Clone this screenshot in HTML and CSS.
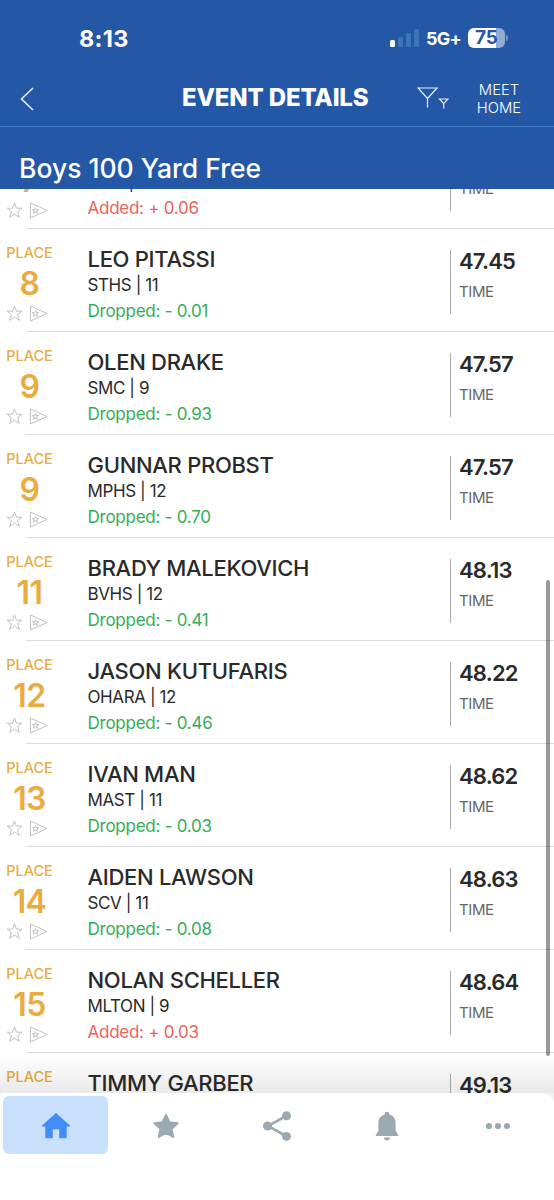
FILE: index.html
```html
<!DOCTYPE html>
<html lang="en">
<head>
<meta charset="UTF-8">
<title>Event Details</title>
<link rel="stylesheet" href="styles.css">
</head>
<body>
<svg class="sprite" width="0" height="0">
<symbol id="star" viewBox="0 0 17 17"><path d="M8.5 1L10.5 6.2H16L11.6 9.6L13.3 15.4L8.5 12L3.7 15.4L5.4 9.6L1 6.2H6.5Z"/></symbol>
<symbol id="flag" viewBox="0 0 19 17"><path d="M1.5 1V16L18 8.5Z"/><path d="M6.5 5.5L7.3 7.6H9.6L7.8 9L8.5 11.3L6.5 10L4.5 11.3L5.2 9L3.4 7.6H5.7Z"/></symbol>
</svg>
<div class="app">
<header>
<div class="status">
<span class="clock">8:13</span>
<div class="signal"><i></i><i></i><i></i><i></i></div>
<span class="network">5G+</span>
<div class="battery"><span>75</span></div>
<i class="battery-tip"></i>
</div>
<div class="toolbar">
<svg class="back" width="14" height="24" viewBox="0 0 14 24"><path d="M13 1L1.5 12L13 23"/></svg>
<h1>EVENT DETAILS</h1>
<svg class="filter" width="32" height="22" viewBox="0 0 32 22"><path d="M1 1H20L10.5 11.5ZM10.5 11V20.5M22.5 12H31L26.7 16.7ZM26.7 16.5V21.5"/></svg>
<a class="meet-home">MEET<br>HOME</a>
</div>
<h2>Boys 100 Yard Free</h2>
</header>

<main>
<ul class="results">
<li>
<div class="place"><span></span><b>7</b><div class="icons"><svg><use href="#star"/></svg><svg><use href="#flag"/></svg></div></div>
<div class="swimmer"><h3></h3><p class="school">|</p><p class="added">Added: + 0.06</p></div>
<div class="time"><b></b><span>TIME</span></div>
</li>
<li>
<div class="place"><span>PLACE</span><b>8</b><div class="icons"><svg><use href="#star"/></svg><svg><use href="#flag"/></svg></div></div>
<div class="swimmer"><h3>LEO PITASSI</h3><p>STHS | 11</p><p class="dropped">Dropped: - 0.01</p></div>
<div class="time"><b>47.45</b><span>TIME</span></div>
</li>
<li>
<div class="place"><span>PLACE</span><b>9</b><div class="icons"><svg><use href="#star"/></svg><svg><use href="#flag"/></svg></div></div>
<div class="swimmer"><h3>OLEN DRAKE</h3><p>SMC | 9</p><p class="dropped">Dropped: - 0.93</p></div>
<div class="time"><b>47.57</b><span>TIME</span></div>
</li>
<li>
<div class="place"><span>PLACE</span><b>9</b><div class="icons"><svg><use href="#star"/></svg><svg><use href="#flag"/></svg></div></div>
<div class="swimmer"><h3>GUNNAR PROBST</h3><p>MPHS | 12</p><p class="dropped">Dropped: - 0.70</p></div>
<div class="time"><b>47.57</b><span>TIME</span></div>
</li>
<li>
<div class="place"><span>PLACE</span><b>11</b><div class="icons"><svg><use href="#star"/></svg><svg><use href="#flag"/></svg></div></div>
<div class="swimmer"><h3>BRADY MALEKOVICH</h3><p>BVHS | 12</p><p class="dropped">Dropped: - 0.41</p></div>
<div class="time"><b>48.13</b><span>TIME</span></div>
</li>
<li>
<div class="place"><span>PLACE</span><b>12</b><div class="icons"><svg><use href="#star"/></svg><svg><use href="#flag"/></svg></div></div>
<div class="swimmer"><h3>JASON KUTUFARIS</h3><p>OHARA | 12</p><p class="dropped">Dropped: - 0.46</p></div>
<div class="time"><b>48.22</b><span>TIME</span></div>
</li>
<li>
<div class="place"><span>PLACE</span><b>13</b><div class="icons"><svg><use href="#star"/></svg><svg><use href="#flag"/></svg></div></div>
<div class="swimmer"><h3>IVAN MAN</h3><p>MAST | 11</p><p class="dropped">Dropped: - 0.03</p></div>
<div class="time"><b>48.62</b><span>TIME</span></div>
</li>
<li>
<div class="place"><span>PLACE</span><b>14</b><div class="icons"><svg><use href="#star"/></svg><svg><use href="#flag"/></svg></div></div>
<div class="swimmer"><h3>AIDEN LAWSON</h3><p>SCV | 11</p><p class="dropped">Dropped: - 0.08</p></div>
<div class="time"><b>48.63</b><span>TIME</span></div>
</li>
<li>
<div class="place"><span>PLACE</span><b>15</b><div class="icons"><svg><use href="#star"/></svg><svg><use href="#flag"/></svg></div></div>
<div class="swimmer"><h3>NOLAN SCHELLER</h3><p>MLTON | 9</p><p class="added">Added: + 0.03</p></div>
<div class="time"><b>48.64</b><span>TIME</span></div>
</li>
<li>
<div class="place"><span>PLACE</span></div>
<div class="swimmer"><h3>TIMMY GARBER</h3></div>
<div class="time"><b>49.13</b></div>
</li>
</ul>
<div class="fade"></div>
<div class="scrollbar"></div>
</main>

<nav>
<a class="active"><svg width="28" height="26" viewBox="0 0 28 26"><path d="M14 0L28 12.5V13.4H24.7V23.7Q24.7 25.3 23 25.3H17.2V16.2H10.8V25.3H5Q3.3 25.3 3.3 23.7V13.4H0V12.5Z"/></svg></a>
<a><svg width="28" height="26" viewBox="0 0 28 26"><path d="M14 2L17.4 9.2L25.6 10.2L19.6 15.8L21.2 24L14 20L6.8 24L8.4 15.8L2.4 10.2L10.6 9.2Z" stroke="#9aaab0" stroke-width="2" stroke-linejoin="round"/></svg></a>
<a><svg width="30" height="30" viewBox="0 0 30 30"><path d="M24 5L6 15L24 25" fill="none" stroke="#9aaab0" stroke-width="2.6"/><circle cx="24.5" cy="4.8" r="4.5"/><circle cx="5.5" cy="15" r="4.5"/><circle cx="24.5" cy="25.4" r="4.5"/></svg></a>
<a><svg width="24" height="30" viewBox="0 0 24 30"><path d="M12 .7A2.3 2.3 0 0 1 14.3 3V3.6C18.5 4.7 20.6 8 20.6 12V19.5L23.3 24.2V25H.7V24.2L3.4 19.5V12C3.4 8 5.5 4.7 9.7 3.6V3A2.3 2.3 0 0 1 12 .7ZM8.6 26.6H15.4Q14.5 29.4 12 29.4Q9.5 29.4 8.6 26.6Z"/></svg></a>
<a><svg width="26" height="8" viewBox="0 0 26 8"><circle cx="4" cy="4" r="3.1"/><circle cx="13" cy="4" r="3.1"/><circle cx="22" cy="4" r="3.1"/></svg></a>
</nav>
</div>
</body>
</html>
```
FILE: styles.css
```css
* {
box-sizing: border-box;
margin: 0;
padding: 0;
}
body {
font-family: 'Inter', sans-serif;
color: #2a2a2a;
background: #fff;
}
.sprite {
position: absolute;
}
.app {
height: 1200px;
display: flex;
flex-direction: column;
overflow: hidden;
}
header {
height: 189px;
background: #2458a7;
color: #fff;
}
.status {
height: 72px;
padding: 4px 46px 0 79px;
display: flex;
align-items: center;
}
.clock {
flex: 1;
font-size: 23.5px;
font-weight: 700;
letter-spacing: 0.3px;
}
.signal {
display: flex;
align-items: flex-end;
gap: 3px;
height: 18px;
margin-right: 7px;
}
.signal i {
width: 5px;
height: 18px;
border-radius: 1.5px;
background: #3f72b8;
}
.signal i:nth-child(1) {
height: 7px;
background: #fff;
}
.signal i:nth-child(2) {
height: 10px;
}
.signal i:nth-child(3) {
height: 14px;
}
.network {
width: 35px;
margin-right: 7px;
font-size: 18px;
font-weight: 700;
letter-spacing: -0.8px;
}
.battery {
width: 37px;
height: 20px;
border-radius: 6px;
background: linear-gradient(90deg, #fff 75%, #91acd3 75%);
color: #2458a7;
font-size: 19px;
font-weight: 700;
line-height: 20px;
text-align: center;
}
.battery-tip {
width: 2px;
height: 6px;
margin-left: 1px;
border-radius: 0 2px 2px 0;
background: #7095c8;
}
.toolbar {
height: 55px;
display: flex;
align-items: center;
border-bottom: 1px solid #3f79c4;
}
.toolbar svg {
fill: none;
stroke: #e4f0ff;
stroke-width: 1.2;
}
.toolbar .back {
margin: 0 148px 0 20px;
stroke-width: 1.6;
}
.toolbar h1 {
width: 235px;
margin-top: -4px;
font-size: 24px;
font-weight: 800;
letter-spacing: -0.15px;
white-space: nowrap;
}
.toolbar .filter {
margin-top: -3px;
}
.meet-home {
width: 60px;
margin: -1px 0 0 20px;
font-size: 14.8px;
font-weight: 300;
line-height: 18px;
text-align: center;
}
header h2 {
padding: 23px 0 0 19px;
font-size: 26.5px;
font-weight: 500;
line-height: 37px;
white-space: nowrap;
}
main {
height: 914px;
position: relative;
overflow: hidden;
}
.results {
margin-top: -63px;
list-style: none;
}
.results li {
height: 103px;
display: flex;
align-items: flex-start;
background: linear-gradient(#dcdcdc, #dcdcdc) no-repeat 26px 102px / 100% 1px;
}
.place {
width: 59px;
padding-top: 16px;
color: #e9ac40;
text-align: center;
}
.place span {
display: block;
height: 16px;
font-size: 14.5px;
line-height: 16px;
font-weight: 500;
}
.place b {
display: block;
height: 44px;
font-size: 32px;
font-weight: 600;
line-height: 45px;
letter-spacing: -0.6px;
}
.icons {
display: flex;
gap: 6px;
padding-left: 6px;
}
.icons svg {
width: 17px;
height: 17px;
fill: none;
stroke: #bfc1c4;
stroke-width: 1;
}
.icons svg + svg {
width: 19px;
}
.swimmer {
width: 391px;
padding: 17px 0 0 28.5px;
font-size: 17px;
line-height: 27px;
white-space: nowrap;
}
.swimmer h3 {
height: 26px;
font-size: 22px;
font-weight: 500;
line-height: 26px;
letter-spacing: -0.3px;
}
.swimmer p {
letter-spacing: -0.4px;
}
.swimmer .school {
padding-left: 41px;
}
.swimmer .added, .swimmer .dropped {
line-height: 24px;
letter-spacing: -0.25px;
}
.added {
color: #ee6259;
}
.dropped {
color: #35ad56;
}
.time {
height: 64px;
margin-top: 21px;
padding-left: 8px;
border-left: 1.5px solid #aaa;
}
.time b {
display: block;
height: 22px;
font-size: 22px;
font-weight: 600;
line-height: 22px;
letter-spacing: -0.8px;
}
.time span {
display: block;
font-size: 15px;
line-height: 39px;
color: #666;
letter-spacing: -0.4px;
}
.fade {
position: absolute;
left: 0;
right: 0;
bottom: 10px;
height: 40px;
background: linear-gradient(rgba(0,0,0,0), rgba(0,0,0,0.085));
box-shadow: 0 10px rgba(0,0,0,0.06);
}
.scrollbar {
position: absolute;
top: 391px;
right: 4px;
width: 4px;
height: 476px;
border-radius: 2px;
background: rgba(0,0,0,0.4);
}
nav {
height: 64px;
margin-top: -10px;
padding: 3px 0 3px 3px;
display: flex;
gap: 5.5px;
position: relative;
background: #fff;
border-radius: 3px 12px 12px 3px;
}
nav a {
width: 105px;
display: flex;
align-items: center;
justify-content: center;
border-radius: 6px;
}
nav svg {
fill: #9aaab0;
margin-top: 1px;
}
nav .active {
background: #c9e0fd;
}
nav .active svg {
fill: #428cfa;
}
```
